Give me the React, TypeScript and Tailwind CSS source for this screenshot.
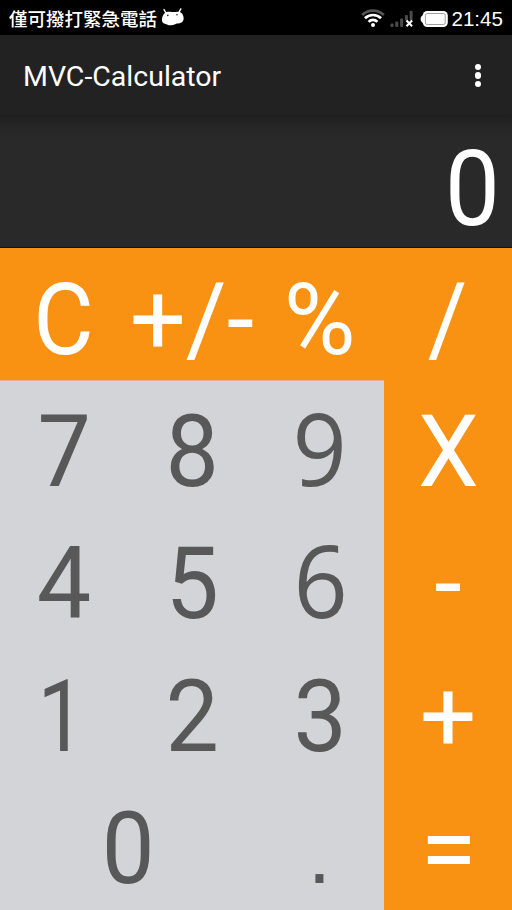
type Tone = 'light' | 'dark';

function Key({
  label,
  tone,
  wide,
  edge,
  glyph = 'scale-x-[0.95]',
}: {
  label: string;
  tone: Tone;
  wide?: boolean;
  edge?: boolean;
  glyph?: string;
}) {
  return (
    <button
      className={`flex items-center justify-center pt-[11px] text-[100px] leading-none whitespace-nowrap ${
        wide ? 'col-span-2' : ''
      } ${edge ? 'border-t border-[#eab096]' : ''} ${
        tone === 'light' ? 'bg-[#f99113] text-white' : 'bg-[#d3d4d8] text-[#585858]'
      }`}
    >
      <span className={`block ${glyph}`}>{label}</span>
    </button>
  );
}

function RobotFace() {
  return (
    <svg width="24" height="20" viewBox="0 0 24 20" className="mt-px ml-[4px]">
      <g stroke="#fff" strokeWidth="1.4" strokeLinecap="round">
        <path d="M3 1.6 L5 5" />
        <path d="M19.8 0.9 L17.8 4.8" />
      </g>
      <path
        d="M4.2 4.4 C6 3.2 9 4.2 11.8 4 C15 3.8 18.8 2.8 21 5.4 C23.4 8.8 23.2 13 20.4 14.6 C18 16 16.2 15 14.2 16.2 C11.6 17.8 8 17.6 6 16.4 C4.2 15.4 2.2 16 1.2 13.4 C0.4 10.8 1.6 6.6 4.2 4.4Z"
        fill="#fff"
      />
      <circle cx="6.8" cy="7.4" r="0.8" fill="#222" />
      <circle cx="16" cy="6.8" r="0.8" fill="#222" />
    </svg>
  );
}

function Wifi() {
  return (
    <svg width="24" height="20" viewBox="0 0 24 20" fill="none">
      <path d="M1.2 6 C7 0.2 17 0.2 22.8 6" stroke="#555" strokeWidth="2.7" />
      <path d="M4 9.2 C8.2 4.9 15.8 4.9 20 9.2" stroke="#fff" strokeWidth="2.7" />
      <path d="M7.6 12.8 C10 10.2 14 10.2 16.4 12.8" stroke="#fff" strokeWidth="2.6" />
      <circle cx="12" cy="16" r="2" fill="#fff" />
    </svg>
  );
}

function Signal() {
  return (
    <svg width="24" height="20" viewBox="0 0 24 20" className="ml-[5px]">
      <g fill="#4b4b4b">
        <rect x="0.5" y="14.5" width="3" height="3.5" rx="1" />
        <rect x="5.3" y="12.5" width="3" height="5.5" rx="1" />
        <rect x="10.1" y="9.5" width="3" height="8.5" rx="1" />
        <rect x="14.9" y="6" width="3" height="5.5" rx="1" />
        <rect x="19.6" y="1.8" width="3" height="9.7" rx="1" />
      </g>
      <path d="M16.5 11.6 L22.1 17.2 M22.1 11.6 L16.5 17.2" stroke="#fff" strokeWidth="2.1" />
    </svg>
  );
}

function Battery() {
  return (
    <svg width="28" height="20" viewBox="0 0 28 20" className="ml-[6px]">
      <path d="M4 5.4 C1.4 6.6 0.6 8 0.6 10 C0.6 12 1.4 13.4 4 14.6Z" fill="#fff" />
      <rect x="2.8" y="2" width="25" height="16" rx="4.4" fill="#fff" />
      <rect x="5.4" y="4.5" width="19.8" height="11" rx="1.8" fill="none" stroke="#777" strokeWidth="0.7" />
    </svg>
  );
}

export default function App() {
  return (
    <main className="flex h-[910px] w-[512px] flex-col overflow-hidden bg-[#292929] font-[Roboto,'Liberation_Sans',sans-serif]">
      <div className="flex h-[35px] shrink-0 items-center bg-black pr-[9px] pl-[9px] text-white">
        <span className="pt-px font-['Noto_Sans_CJK_TC',sans-serif] text-[18.5px] leading-[24px] font-medium">
          僅可撥打緊急電話
        </span>
        <RobotFace />
        <div className="ml-auto flex items-center pt-[3px]">
          <Wifi />
          <Signal />
          <Battery />
          <span className="ml-[3px] font-['Liberation_Sans',sans-serif] text-[20.6px] leading-[24px]">21:45</span>
        </div>
      </div>

      <header className="flex h-[80px] shrink-0 items-center justify-between bg-[#222222] pr-[31px] pl-[23px] text-white">
        <h1 className="pt-[4px] text-[28.5px] leading-[34px]">MVC-Calculator</h1>
        <button className="flex flex-col gap-[2px] pt-px">
          <span className="size-[6.5px] rounded-full bg-white" />
          <span className="size-[6.5px] rounded-full bg-white" />
          <span className="size-[6.5px] rounded-full bg-white" />
        </button>
      </header>

      <div className="flex h-[133px] shrink-0 items-center justify-end border-b border-[#0c0c30] bg-linear-to-b from-[#1f1f1f] via-[#272727] via-10% to-[#292929] to-20% pt-[16px] pr-[10px] text-[105px] leading-none text-white">
        <output className="block scale-x-[0.93]">0</output>
      </div>

      <div className="grid grow grid-cols-4 grid-rows-[132px_repeat(4,132.5px)] bg-[#d3d4d8]">
        <Key label="C" tone="light" glyph="scale-x-[0.93]" />
        <Key label="+/-" tone="light" glyph="scale-x-[0.99]" />
        <Key label="%" tone="light" glyph="scale-x-[0.98]" />
        <Key label="/" tone="light" glyph="scale-x-[0.96]" />
        <Key label="7" tone="dark" edge />
        <Key label="8" tone="dark" edge />
        <Key
          label="9"
          tone="dark"
          edge
          glyph="font-['Open_Sans',sans-serif] font-[450] pb-[11px] pr-px scale-x-[0.95]"
        />
        <Key label="X" tone="light" glyph="scale-x-[0.97]" />
        <Key label="4" tone="dark" glyph="scale-x-[0.97]" />
        <Key label="5" tone="dark" />
        <Key
          label="6"
          tone="dark"
          glyph="font-['Open_Sans',sans-serif] font-[450] pb-[11px] pl-[2px] scale-x-[0.95]"
        />
        <Key label="-" tone="light" glyph="" />
        <Key label="1" tone="dark" glyph="pr-[5px] scale-x-[0.85]" />
        <Key label="2" tone="dark" />
        <Key label="3" tone="dark" />
        <Key label="+" tone="light" glyph="" />
        <Key label="0" tone="dark" wide glyph="scale-x-[0.94]" />
        <Key
          label="."
          tone="dark"
          glyph="font-['Liberation_Sans',sans-serif] text-[84px] leading-[100px] pt-[10px] pr-px"
        />
        <Key label="=" tone="light" glyph="pt-[2px] scale-x-[1.03]" />
      </div>
    </main>
  );
}
